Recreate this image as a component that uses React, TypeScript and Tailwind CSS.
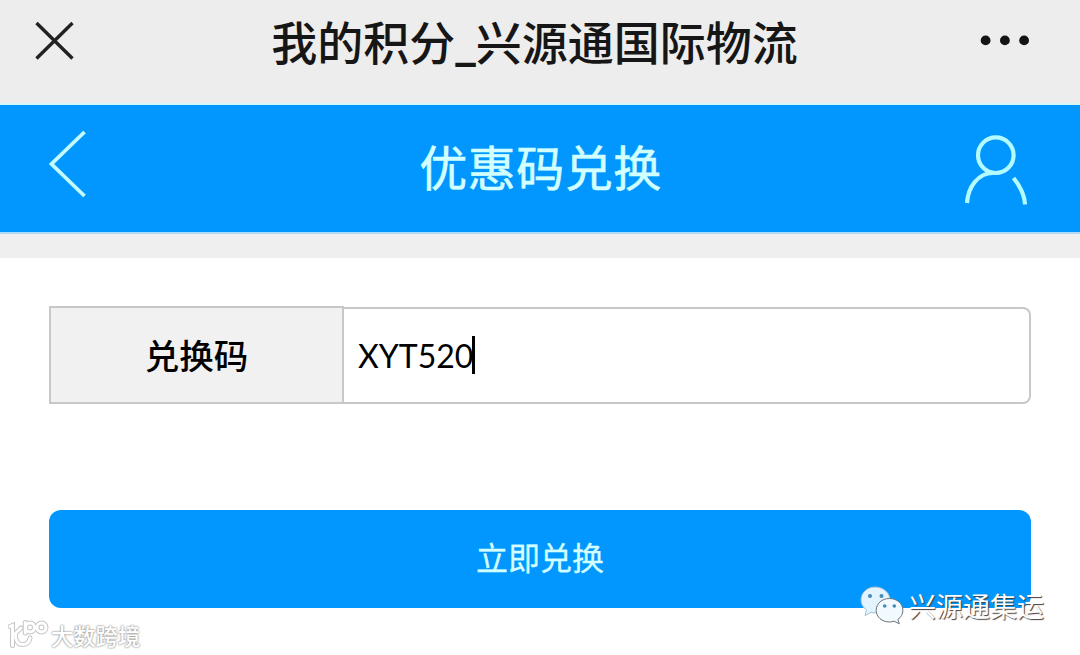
import React, { useState } from 'react';

const CloseIcon = () => (
  <svg width="40" height="40" viewBox="0 0 40 40" fill="none" stroke="#222" strokeWidth="3.4">
    <path d="M2.500 2 38.500 37.500M38.500 2 2.500 37.500" />
  </svg>
);

const MoreIcon = () => (
  <svg width="50" height="12" viewBox="0 0 50 12" fill="#141414">
    <circle cx="5.6" cy="6.4" r="4.9" />
    <circle cx="24.9" cy="6.4" r="4.9" />
    <circle cx="44.1" cy="6.4" r="4.9" />
  </svg>
);

const BackIcon = () => (
  <svg width="40" height="70" viewBox="0 0 40 70" fill="none" stroke="#c4fbff" strokeWidth="3.8">
    <path d="M37.500 3 4.500 35 37.500 67" />
  </svg>
);

const UserIcon = () => (
  <svg width="66" height="74" viewBox="0 0 66 74" fill="none" stroke="#b4fbff" strokeWidth="4.2">
    <circle cx="32.8" cy="22.2" r="17.8" />
    <path d="M4 70C5 54 15 40 30 40M50.500 45C57 53 61.500 61 62 71.500" />
  </svg>
);

const WechatIcon = () => (
  <svg width="44" height="40" viewBox="0 0 44 40" strokeWidth="1">
    <path
      d="M15 1C7 1 1 6.800 1 14c0 4 2 7.500 5.500 10L5 29.500l6-3.200c1.300.4 2.700.6 4 .6 8.500 0 15-5.500 15-12.700S23.500 1 15 1Z"
      fill="#e2f4ff"
      stroke="#a3bfce"
    />
    <circle cx="10" cy="10" r="2" fill="#438bb9" />
    <circle cx="21.500" cy="10" r="2" fill="#438bb9" />
    <path
      d="M29.500 12.500c-7.500 0-13.300 5-13.300 11.800S22 36 29.500 36c1.600 0 3.200-.3 4.600-.8l5.200 2.600-1.400-4.400c3.200-2.200 5-5.300 5-9.100 0-6.800-6.100-11.800-13.400-11.800Z"
      fill="#f1faff"
      stroke="#6d7478"
    />
    <circle cx="24.700" cy="20" r="1.800" fill="#438bb9" />
    <circle cx="34.300" cy="20" r="1.800" fill="#438bb9" />
  </svg>
);

const LogoShape = () => (
  <>
    <path d="M1 5.500 3.500 4.500V24.500M12 7 6.500 12.500C6 19 8.500 23.500 13.500 23.500c4.500 0 7-3 7.500-6.500M16.300 1.500v10.500" />
    <circle cx="21" cy="6.500" r="4.500" />
    <circle cx="32.500" cy="6.500" r="4.500" />
  </>
);

const BrandIcon = () => (
  <svg width="42" height="30" viewBox="-1 -1 42 30" fill="none" strokeLinecap="round">
    <g stroke="#c6c6c6" strokeWidth="5">
      <LogoShape />
    </g>
    <g stroke="#fff" strokeWidth="3">
      <LogoShape />
    </g>
  </svg>
);

export default function App() {
  const [code, setCode] = useState('XYT520');

  return (
    <div className="relative flex h-[655px] w-[1080px] flex-col overflow-hidden bg-white font-['Noto_Sans_CJK_SC',sans-serif]">
      {/* Browser title bar */}
      <header className="flex h-[105px] items-start justify-between border-b-2 border-[#d8f5f5] bg-[#ededed] pr-[50px] pl-[34px]">
        <button className="mt-[21px]" aria-label="关闭">
          <CloseIcon />
        </button>
        <h1 className="mt-[6px] ml-[15px] text-[46px] leading-[68px] font-medium whitespace-nowrap text-[#161616]">
          我的积分<span className="inline-block translate-y-[3px] font-[Roboto]">_</span>兴源通国际物流
        </h1>
        <button className="mt-[34px]" aria-label="更多">
          <MoreIcon />
        </button>
      </header>

      {/* Page nav */}
      <nav className="flex h-[129px] items-start justify-between border-b-2 border-[#b0daf5] bg-[#0197ff] pr-[51px] pl-[47px]">
        <button className="mt-[24px]" aria-label="返回">
          <BackIcon />
        </button>
        <h2 className="mt-[25px] ml-[31px] text-[48px] leading-[70px] tracking-[0.5px] text-[#d2ffff] [-webkit-text-stroke:0.6px_#d2ffff]">
          优惠码兑换
        </h2>
        <button className="mt-[28px]" aria-label="我的">
          <UserIcon />
        </button>
      </nav>
      <div className="h-6 shrink-0 bg-[#efefef]" />

      <main className="px-[49px] pt-12">
        <div className="flex h-[98px] items-end">
          <label
            htmlFor="code"
            className="flex h-full w-[295px] items-center justify-center border-2 border-[#c8c8c8] bg-[#f1f1f1] text-[34.5px] font-medium text-black"
          >
            兑换码
          </label>
          <div className="flex h-[97px] flex-1 items-center rounded-r-lg border-2 border-l-0 border-[#c8c8c8] pl-[14px]">
            <input
              id="code"
              value={code}
              onChange={(e) => setCode(e.target.value)}
              className="w-[114px] bg-transparent font-[Lato] text-[32px] text-black outline-none"
            />
            <span className="mb-[2px] h-[38px] w-[3px] shrink-0 bg-black" />
          </div>
        </div>
        <button className="mt-[106px] flex h-[98px] w-full items-center justify-center rounded-[12px] bg-[#0197ff] pb-[7px] text-[32px] text-[#d2ffff] [-webkit-text-stroke:0.3px_#d2ffff]">
          立即兑换
        </button>
      </main>

      {/* Watermarks */}
      <div className="absolute top-[585px] left-[860px] flex items-center">
        <WechatIcon />
        <span className="ml-[5px] text-[27px] leading-[42px] whitespace-nowrap text-white [text-shadow:1px_1px_1px_#443c3c]">
          兴源通集运
        </span>
      </div>
      <div className="absolute top-[619px] left-[8px] flex items-center">
        <BrandIcon />
        <span className="ml-[1px] text-[22.3px] leading-[32px] font-medium whitespace-nowrap text-white [text-shadow:0_0_2px_#888,0_0_2px_#aaa]">
          大数跨境
        </span>
      </div>
    </div>
  );
}
